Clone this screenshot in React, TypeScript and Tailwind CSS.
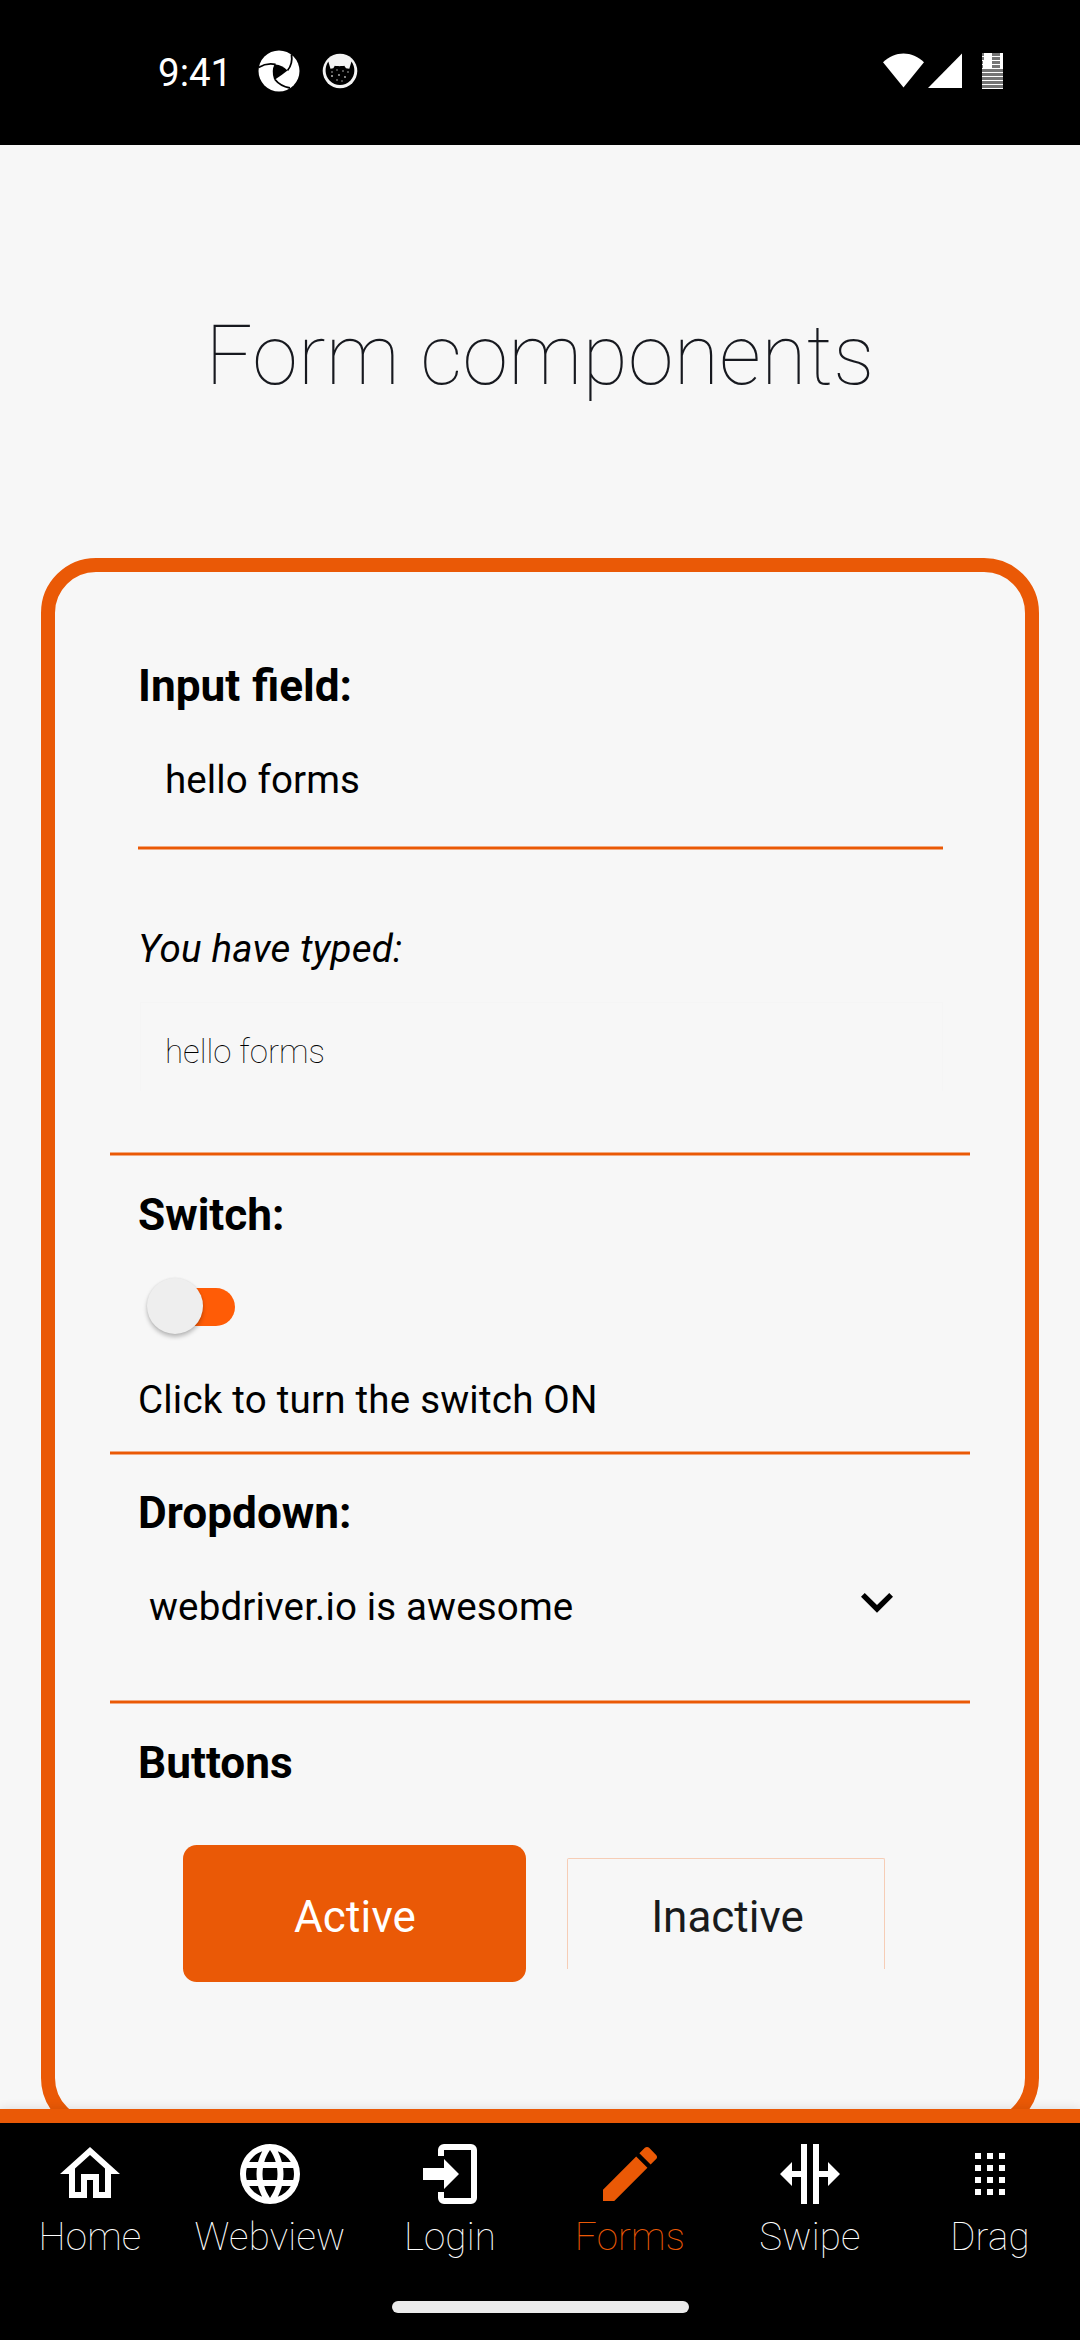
import type { ReactNode } from "react";

const HOME =
  "M12 5.69L17 10.19V18H15V12H9V18H7V10.19L12 5.69M12 3L2 12H5V20H11V14H13V20H19V12H22L12 3Z";
const WEB =
  "M16.36,14C16.44,13.34 16.5,12.68 16.5,12C16.5,11.32 16.44,10.66 16.36,10H19.74C19.9,10.64 20,11.31 20,12C20,12.69 19.9,13.36 19.74,14M14.59,19.56C15.19,18.45 15.65,17.25 15.97,16H18.92C17.96,17.65 16.43,18.93 14.59,19.56M14.34,14H9.66C9.56,13.34 9.5,12.68 9.5,12C9.5,11.32 9.56,10.65 9.66,10H14.34C14.43,10.65 14.5,11.32 14.5,12C14.5,12.68 14.43,13.34 14.34,14M12,19.96C11.17,18.76 10.5,17.43 10.09,16H13.91C13.5,17.43 12.83,18.76 12,19.96M8,8H5.08C6.03,6.34 7.57,5.06 9.4,4.44C8.8,5.55 8.35,6.75 8,8M5.08,16H8C8.35,17.25 8.8,18.45 9.4,19.56C7.57,18.93 6.03,17.65 5.08,16M4.26,14C4.1,13.36 4,12.69 4,12C4,11.31 4.1,10.64 4.26,10H7.64C7.56,10.66 7.5,11.32 7.5,12C7.5,12.68 7.56,13.34 7.64,14M12,4.03C12.83,5.23 13.5,6.57 13.91,8H10.09C10.5,6.57 11.17,5.23 12,4.03M18.92,8H15.97C15.65,6.75 15.19,5.55 14.59,4.44C16.43,5.07 17.96,6.34 18.92,8M12,2C6.47,2 2,6.5 2,12A10,10 0 0,0 12,22A10,10 0 0,0 22,12A10,10 0 0,0 12,2Z";
const LOGIN =
  "M10,17V14H3V10H10V7L15,12L10,17M10,2H19A2,2 0 0,1 21,4V20A2,2 0 0,1 19,22H10A2,2 0 0,1 8,20V18H10V20H19V4H10V6H8V4A2,2 0 0,1 10,2Z";
const PENCIL =
  "M20.71,7.04C21.1,6.65 21.1,6 20.71,5.63L18.37,3.29C18,2.9 17.35,2.9 16.96,3.29L15.12,5.12L18.87,8.87M3,17.25V21H6.75L17.81,9.93L14.06,6.18L3,17.25Z";
const SPLIT =
  "M18,16V13H15V22H13V2H15V11H18V8L22,12L18,16M2,12L6,16V13H9V22H11V2H9V11H6V8L2,12Z";
const DOTS =
  "M7,5H9V7H7ZM11,5H13V7H11ZM15,5H17V7H15ZM7,9H9V11H7ZM11,9H13V11H11ZM15,9H17V11H15ZM7,13H9V15H7ZM11,13H13V15H11ZM15,13H17V15H15ZM7,17H9V19H7ZM11,17H13V19H11ZM15,17H17V19H15Z";

const tabs = [
  { label: "Home", icon: HOME },
  { label: "Webview", icon: WEB },
  { label: "Login", icon: LOGIN },
  { label: "Forms", icon: PENCIL, active: true },
  { label: "Swipe", icon: SPLIT },
  { label: "Drag", icon: DOTS },
];

function Rule({ className }: { className: string }) {
  return (
    <div className={`h-[4px] shrink-0 border-y border-[#f2a97f] bg-[#ea5906] ${className}`} />
  );
}

function Heading({ className, children }: { className: string; children: ReactNode }) {
  return (
    <h2
      className={`ml-[28px] text-[44.2px] leading-[52px] font-bold text-black [word-spacing:1px] ${className}`}
    >
      {children}
    </h2>
  );
}

function StatusBar() {
  return (
    <header className="flex h-[145px] shrink-0 items-start bg-black pt-[48px] pr-[77px] pl-[158px] text-white">
      <span className="mt-[2px] w-[100px] text-[38.5px] leading-[46px]">9:41</span>
      <svg className="mt-[2px] h-[42px] w-[42px]" viewBox="0 0 42 42">
        <circle cx="21" cy="21" r="20.5" fill="#fff" />
        <path d="M17.500 14.500Q24 15 29.500 20.500Q24 25 17 29.500Q14 22 17.500 14.500Z" fill="#000" />
        <g fill="none" stroke="#000" strokeWidth="1.800">
          <path d="M0.500 17.500Q9 12.500 17.500 14.500" />
          <path d="M33.500 4.500Q35 14 29.500 20.500" />
          <path d="M17 29.500Q22 36 32 38" />
          <path d="M17.500 14.500Q14 21 17 29.500" />
        </g>
      </svg>
      <svg className="mt-[5px] ml-[22px] h-[36px] w-[36px]" viewBox="0 0 36 36">
        <circle cx="18" cy="18" r="17.300" fill="#f4f4f4" />
        <path
          d="M6.300 8.500L8.500 15.800L11.300 15.300L12.800 12.800C15 13.300 20 13.300 22.300 12.800L24 15.300L27.300 15.800L29.500 8.500C33.500 14 33.500 22 28.500 27.500C22.500 33.500 13.500 33.500 7.500 27.500C2.500 22 2.500 14 6.300 8.500Z"
          fill="#000"
        />
        <g fill="#bbb">
          <circle cx="10" cy="19" r="0.800" />
          <circle cx="15" cy="17" r="0.700" />
          <circle cx="21" cy="18" r="0.800" />
          <circle cx="26" cy="19" r="0.800" />
          <circle cx="10" cy="23" r="1" />
          <circle cx="17" cy="22" r="0.900" />
          <circle cx="23" cy="24" r="0.900" />
          <circle cx="15" cy="27" r="0.800" />
          <circle cx="20" cy="28" r="0.700" />
        </g>
      </svg>
      <div className="ml-auto flex items-start pt-[5px]">
        <svg className="h-[36px] w-[42px]" viewBox="0 0 42 36">
          <path d="M0 9.300C12 -2.500 29 -2.500 41 9.300L20.500 34.500Z" fill="#fff" />
        </svg>
        <svg className="ml-[3px] h-[36px] w-[35px]" viewBox="0 0 35 36">
          <path d="M34 0.500V35H0Z" fill="#fff" />
        </svg>
        <svg className="ml-[19px] h-[36px] w-[21px]" viewBox="0 0 21 36">
          <rect width="21" height="36" fill="#fff" />
          <g fill="#757575">
            <rect y="16" width="21" height="3" />
            <rect y="20" width="21" height="3" />
            <rect y="24" width="21" height="3" />
            <rect y="28" width="21" height="3" />
            <rect y="32" width="21" height="3" />
            <rect x="10" width="8" height="3" />
            <rect x="10" y="4" width="8" height="3" />
            <rect x="10" y="8" width="8" height="3" />
            <rect x="10" y="12" width="8" height="3" />
            <rect y="0" width="2" height="3" />
            <rect y="4" width="2" height="3" />
            <rect y="8" width="1" height="3" />
            <rect y="12" width="1" height="3" />
          </g>
        </svg>
      </div>
    </header>
  );
}

function TabBar() {
  return (
    <nav className="relative flex h-[231px] shrink-0 flex-col border-t-[14px] border-[#ea5906] bg-black shadow-[0_0_10px_rgba(0,0,0,0.12)]">
      <div className="grid grid-cols-6 pt-[15px]">
        {tabs.map((t) => (
          <div
            key={t.label}
            className={`flex flex-col items-center ${t.active ? "text-[#ea5906]" : "text-white"}`}
          >
            <svg className="h-[72px] w-[72px]" viewBox="0 0 24 24" fill="currentColor">
              <path d={t.icon} />
            </svg>
            <span className="mt-[4px] text-[38.5px] leading-[46px] font-thin tracking-[0.2px]">
              {t.label}
            </span>
          </div>
        ))}
      </div>
      <div className="mx-auto mt-[41px] h-[12px] w-[297px] rounded-full bg-[#ebebeb]" />
    </nav>
  );
}

export default function App() {
  return (
    <div className="flex h-[2340px] w-[1080px] flex-col overflow-hidden bg-[#f7f7f7] font-[Roboto,sans-serif]">
      <StatusBar />
      <main className="flex min-h-0 flex-1 flex-col overflow-hidden">
        <h1 className="mt-[161px] text-center text-[82.5px] leading-[100px] font-thin tracking-[0.35px] text-[#17191f]">
          Form components
        </h1>
        <section className="mx-[41px] mt-[152px] flex h-[1575px] shrink-0 flex-col rounded-[55px] border-[14px] border-[#ea5906] px-[55px]">
          <Heading className="mt-[88px]">Input field:</Heading>
          <p className="mt-[45px] ml-[55px] text-[38.5px] leading-[46px] tracking-[0.1px] text-black">
            hello forms
          </p>
          <Rule className="mt-[43px] mr-[27px] ml-[28px]" />
          <p className="mt-[76px] ml-[28px] text-[38.5px] leading-[46px] tracking-[0.22px] text-black italic">
            You have typed:
          </p>
          <div className="mt-[30px] mr-[27px] ml-[30px] h-[89px] border border-b-0 border-[#f5f5f5] pt-[29px] pl-[24px]">
            <p className="text-[33px] leading-[40px] font-thin text-black">hello forms</p>
          </div>
          <Rule className="mt-[61px]" />
          <Heading className="mt-[33px]">Switch:</Heading>
          <div className="mt-[37px] ml-[37px] flex h-[56px] items-center">
            <div className="z-10 h-[56px] w-[56px] rounded-full bg-[#eeeeee] shadow-[0_3px_4px_rgba(0,0,0,0.25),0_0_2px_rgba(0,0,0,0.08)]" />
            <div className="mt-[1px] -ml-[46px] h-[38px] w-[78px] rounded-full bg-[#ff5c06]" />
          </div>
          <p className="mt-[43px] ml-[28px] text-[38.5px] leading-[46px] tracking-[0.22px] text-black">
            Click to turn the switch ON
          </p>
          <Rule className="mt-[28px]" />
          <Heading className="mt-[32px]">Dropdown:</Heading>
          <div className="mt-[31px] mr-[61px] ml-[39px] flex h-[64px] items-start justify-between">
            <p className="mt-[14px] text-[38.5px] leading-[46px] tracking-[0.16px] text-black">
              webdriver.io is awesome
            </p>
            <svg className="h-[64px] w-[64px]" viewBox="0 0 24 24">
              <path d="M7.410 8.590L12 13.170l4.590-4.580L18 10l-6 6-6-6 1.410-1.410z" />
            </svg>
          </div>
          <Rule className="mt-[66px]" />
          <Heading className="mt-[33px]">Buttons</Heading>
          <div className="mt-[56px] ml-[73px] flex">
            <button className="h-[137px] w-[343px] rounded-[13.75px] bg-[#ea5906] pt-[7px] pl-[1px] text-[44px] tracking-[0.15px] text-white">
              Active
            </button>
            <button className="mt-[13px] ml-[41px] h-[111px] w-[318px] rounded-t-[2px] border border-b-0 border-[#f6cdb6] pt-[6px] pl-[3px] text-[44px] text-[#191b1c]">
              Inactive
            </button>
          </div>
        </section>
      </main>
      <TabBar />
    </div>
  );
}
